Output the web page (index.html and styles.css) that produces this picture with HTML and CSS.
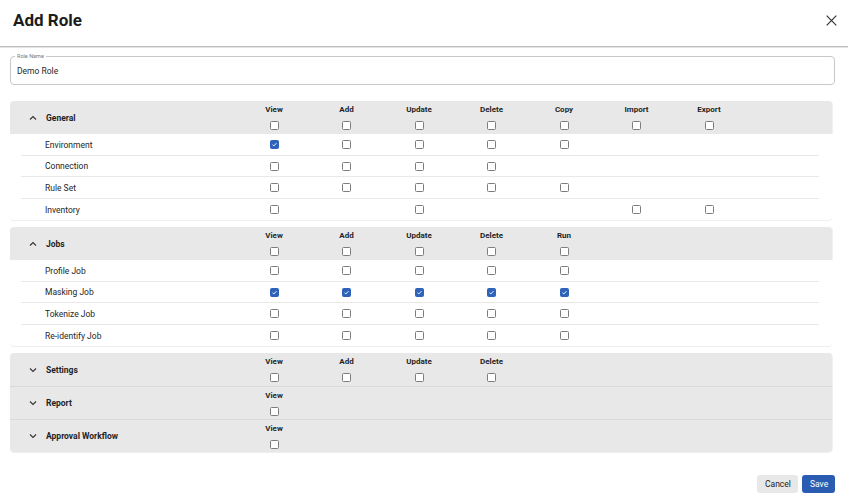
FILE: index.html
```html
<!DOCTYPE html>
<html lang="en">
<head>
<meta charset="utf-8">
<title>Add Role</title>
<link rel="stylesheet" href="styles.css">
</head>
<body>
<div class="dialog">
  <header class="dlg-head">
    <h1 class="dlg-title">Add Role</h1>
    <button class="close" aria-label="Close">
      <svg width="11" height="11" viewBox="0 0 11 11"><path d="M0.7 0.7L10.3 10.3M10.3 0.7L0.7 10.3" stroke="#333" stroke-width="1.2" fill="none"/></svg>
    </button>
  </header>

  <main class="dlg-body">
    <div class="field">
      <span class="field-label">Role Name</span>
      <span class="field-value">Demo Role</span>
    </div>

    <div class="accs">
      <!-- General -->
      <section class="acc expanded">
        <div class="acc-head">
          <div class="acc-title"><svg class="chev" width="8" height="6" viewBox="0 0 8 6"><path d="M1 4.5L4 1.5L7 4.5" stroke="#333" stroke-width="1.1" fill="none"/></svg>General</div>
          <div class="col"><span class="col-label">View</span><span class="cb"></span></div>
          <div class="col"><span class="col-label">Add</span><span class="cb"></span></div>
          <div class="col"><span class="col-label">Update</span><span class="cb"></span></div>
          <div class="col"><span class="col-label">Delete</span><span class="cb"></span></div>
          <div class="col"><span class="col-label">Copy</span><span class="cb"></span></div>
          <div class="col"><span class="col-label">Import</span><span class="cb"></span></div>
          <div class="col"><span class="col-label">Export</span><span class="cb"></span></div>
        </div>
        <div class="acc-body">
          <div class="row">
            <div class="row-label">Environment</div>
            <div class="cell"><span class="cb on"><svg viewBox="0 0 9 9"><path d="M2 4.8L3.7 6.3L7 2.8" stroke="#fff" stroke-width="1.2" fill="none"/></svg></span></div>
            <div class="cell"><span class="cb"></span></div>
            <div class="cell"><span class="cb"></span></div>
            <div class="cell"><span class="cb"></span></div>
            <div class="cell"><span class="cb"></span></div>
            <div class="cell"></div>
            <div class="cell"></div>
          </div>
          <div class="row">
            <div class="row-label">Connection</div>
            <div class="cell"><span class="cb"></span></div>
            <div class="cell"><span class="cb"></span></div>
            <div class="cell"><span class="cb"></span></div>
            <div class="cell"><span class="cb"></span></div>
            <div class="cell"></div>
            <div class="cell"></div>
            <div class="cell"></div>
          </div>
          <div class="row">
            <div class="row-label">Rule Set</div>
            <div class="cell"><span class="cb"></span></div>
            <div class="cell"><span class="cb"></span></div>
            <div class="cell"><span class="cb"></span></div>
            <div class="cell"><span class="cb"></span></div>
            <div class="cell"><span class="cb"></span></div>
            <div class="cell"></div>
            <div class="cell"></div>
          </div>
          <div class="row">
            <div class="row-label">Inventory</div>
            <div class="cell"><span class="cb"></span></div>
            <div class="cell"></div>
            <div class="cell"><span class="cb"></span></div>
            <div class="cell"></div>
            <div class="cell"></div>
            <div class="cell"><span class="cb"></span></div>
            <div class="cell"><span class="cb"></span></div>
          </div>
        </div>
      </section>

      <!-- Jobs -->
      <section class="acc expanded">
        <div class="acc-head">
          <div class="acc-title"><svg class="chev" width="8" height="6" viewBox="0 0 8 6"><path d="M1 4.5L4 1.5L7 4.5" stroke="#333" stroke-width="1.1" fill="none"/></svg>Jobs</div>
          <div class="col"><span class="col-label">View</span><span class="cb"></span></div>
          <div class="col"><span class="col-label">Add</span><span class="cb"></span></div>
          <div class="col"><span class="col-label">Update</span><span class="cb"></span></div>
          <div class="col"><span class="col-label">Delete</span><span class="cb"></span></div>
          <div class="col"><span class="col-label">Run</span><span class="cb"></span></div>
        </div>
        <div class="acc-body">
          <div class="row">
            <div class="row-label">Profile Job</div>
            <div class="cell"><span class="cb"></span></div>
            <div class="cell"><span class="cb"></span></div>
            <div class="cell"><span class="cb"></span></div>
            <div class="cell"><span class="cb"></span></div>
            <div class="cell"><span class="cb"></span></div>
          </div>
          <div class="row">
            <div class="row-label">Masking Job</div>
            <div class="cell"><span class="cb on"><svg viewBox="0 0 9 9"><path d="M2 4.8L3.7 6.3L7 2.8" stroke="#fff" stroke-width="1.2" fill="none"/></svg></span></div>
            <div class="cell"><span class="cb on"><svg viewBox="0 0 9 9"><path d="M2 4.8L3.7 6.3L7 2.8" stroke="#fff" stroke-width="1.2" fill="none"/></svg></span></div>
            <div class="cell"><span class="cb on"><svg viewBox="0 0 9 9"><path d="M2 4.8L3.7 6.3L7 2.8" stroke="#fff" stroke-width="1.2" fill="none"/></svg></span></div>
            <div class="cell"><span class="cb on"><svg viewBox="0 0 9 9"><path d="M2 4.8L3.7 6.3L7 2.8" stroke="#fff" stroke-width="1.2" fill="none"/></svg></span></div>
            <div class="cell"><span class="cb on"><svg viewBox="0 0 9 9"><path d="M2 4.8L3.7 6.3L7 2.8" stroke="#fff" stroke-width="1.2" fill="none"/></svg></span></div>
          </div>
          <div class="row">
            <div class="row-label">Tokenize Job</div>
            <div class="cell"><span class="cb"></span></div>
            <div class="cell"><span class="cb"></span></div>
            <div class="cell"><span class="cb"></span></div>
            <div class="cell"><span class="cb"></span></div>
            <div class="cell"><span class="cb"></span></div>
          </div>
          <div class="row">
            <div class="row-label">Re-identify Job</div>
            <div class="cell"><span class="cb"></span></div>
            <div class="cell"><span class="cb"></span></div>
            <div class="cell"><span class="cb"></span></div>
            <div class="cell"><span class="cb"></span></div>
            <div class="cell"><span class="cb"></span></div>
          </div>
        </div>
      </section>

      <div class="acc-group">
        <!-- Settings -->
        <section class="acc collapsed">
          <div class="acc-head">
            <div class="acc-title"><svg class="chev" width="8" height="6" viewBox="0 0 8 6"><path d="M1 1.5L4 4.5L7 1.5" stroke="#333" stroke-width="1.1" fill="none"/></svg>Settings</div>
            <div class="col"><span class="col-label">View</span><span class="cb"></span></div>
            <div class="col"><span class="col-label">Add</span><span class="cb"></span></div>
            <div class="col"><span class="col-label">Update</span><span class="cb"></span></div>
            <div class="col"><span class="col-label">Delete</span><span class="cb"></span></div>
          </div>
        </section>
        <!-- Report -->
        <section class="acc collapsed">
          <div class="acc-head">
            <div class="acc-title"><svg class="chev" width="8" height="6" viewBox="0 0 8 6"><path d="M1 1.5L4 4.5L7 1.5" stroke="#333" stroke-width="1.1" fill="none"/></svg>Report</div>
            <div class="col"><span class="col-label">View</span><span class="cb"></span></div>
          </div>
        </section>
        <!-- Approval Workflow -->
        <section class="acc collapsed">
          <div class="acc-head">
            <div class="acc-title"><svg class="chev" width="8" height="6" viewBox="0 0 8 6"><path d="M1 1.5L4 4.5L7 1.5" stroke="#333" stroke-width="1.1" fill="none"/></svg>Approval Workflow</div>
            <div class="col"><span class="col-label">View</span><span class="cb"></span></div>
          </div>
        </section>
      </div>
    </div>
  </main>

  <footer class="dlg-foot">
    <button class="btn btn-cancel">Cancel</button>
    <button class="btn btn-save">Save</button>
  </footer>
</div>
</body>
</html>
```

FILE: styles.css
```css
* { box-sizing: border-box; }

html, body {
  margin: 0;
  padding: 0;
  background: #ffffff;
}

body {
  font-family: Roboto, "Liberation Sans", Arial, sans-serif;
  color: #1f1f1f;
  width: 848px;
  height: 500px;
  overflow: hidden;
}

.dialog {
  width: 848px;
  height: 500px;
  display: flex;
  flex-direction: column;
}

/* Header */
.dlg-head {
  height: 47px;
  display: flex;
  align-items: center;
  justify-content: space-between;
  padding: 0 11px 6px 13px;
  border-bottom: 1px solid #bcbcbc;
  box-shadow: 0 1px 0 #e4e4e4;
}

.dlg-title {
  margin: 0;
  font-size: 17px;
  font-weight: 700;
  line-height: 20px;
  color: #1c1c1c;
}

.close {
  border: 0;
  background: none;
  padding: 0;
  width: 11px;
  height: 11px;
  display: flex;
  cursor: pointer;
}

/* Body */
.dlg-body {
  padding: 9px 13px 0 10px;
}

.field {
  position: relative;
  height: 29px;
  border: 1px solid #c8c8c8;
  border-radius: 4px;
  display: flex;
  align-items: center;
  padding-left: 6px;
}

.field-label {
  position: absolute;
  top: -4px;
  left: 4px;
  padding: 0 2px;
  background: #fff;
  font-size: 5.5px;
  line-height: 7px;
  color: #7a7a7a;
}

.field-value {
  font-size: 8.5px;
  line-height: 12px;
  color: #1f1f1f;
}

/* Accordions */
.accs {
  margin-top: 16px;
  margin-right: 3px;
}

.acc {
  background: #fff;
  border-radius: 4px;
  box-shadow: 0 1px 1px rgba(0, 0, 0, 0.07);
}

.acc.expanded {
  margin-bottom: 7px;
}

.acc-group .acc {
  border-radius: 0;
}
.acc-group .acc:first-child {
  border-top-left-radius: 4px;
  border-top-right-radius: 4px;
}
.acc-group .acc:last-child {
  border-bottom-left-radius: 4px;
  border-bottom-right-radius: 4px;
}
.acc-group .acc + .acc .acc-head {
  border-top: 1px solid #d9d9d9;
}

.acc-head {
  height: 33px;
  background: #e8e8e8;
  border-radius: inherit;
  display: grid;
  grid-template-columns: 227.75px repeat(7, 72.5px);
  align-items: stretch;
  box-shadow: 1px 0 0 rgba(0, 0, 0, 0.05);
}

.acc.expanded .acc-head {
  border-bottom-left-radius: 0;
  border-bottom-right-radius: 0;
}

.acc-title {
  display: flex;
  align-items: center;
  gap: 9px;
  padding-left: 19px;
  font-size: 8.5px;
  font-weight: 700;
  color: #1f1f1f;
}

.chev {
  flex: none;
}

.col {
  display: flex;
  flex-direction: column;
  align-items: center;
  padding-top: 3.5px;
}

.col-label {
  font-size: 8px;
  font-weight: 700;
  line-height: 10px;
  margin-bottom: 6px;
  color: #1f1f1f;
}

.acc-body {
  padding: 0 13px 0 11px;
}

.row {
  height: 21.5px;
  padding-top: 1px;
  display: grid;
  grid-template-columns: 216.75px repeat(7, 72.5px);
  align-items: center;
  border-bottom: 1px solid #e9e9e9;
}

.row:last-child {
  border-bottom: 0;
}

.row-label {
  padding-left: 24px;
  font-size: 8.5px;
  color: #262626;
}

.cell {
  display: flex;
  justify-content: center;
  align-items: center;
}

/* Checkbox */
.cb {
  width: 9px;
  height: 9px;
  border: 1.2px solid #7d7d7d;
  border-radius: 1.5px;
  background: #fff;
  display: block;
  flex: none;
}

.cb.on {
  background: #2f63b9;
  border-color: #2f63b9;
}

.cb.on svg {
  display: block;
  width: 100%;
  height: 100%;
}

/* Footer */
.dlg-foot {
  margin-top: auto;
  display: flex;
  justify-content: flex-end;
  gap: 4px;
  padding: 0 13px 7px 0;
}

.btn {
  height: 18px;
  border: 0;
  border-radius: 3px;
  font-family: inherit;
  font-size: 8.5px;
  padding: 0 8px;
  cursor: pointer;
}

.btn-cancel {
  background: #e8e8e8;
  color: #222;
  width: 41px;
}

.btn-save {
  background: #2a5db1;
  color: #fff;
  width: 33px;
}
```
